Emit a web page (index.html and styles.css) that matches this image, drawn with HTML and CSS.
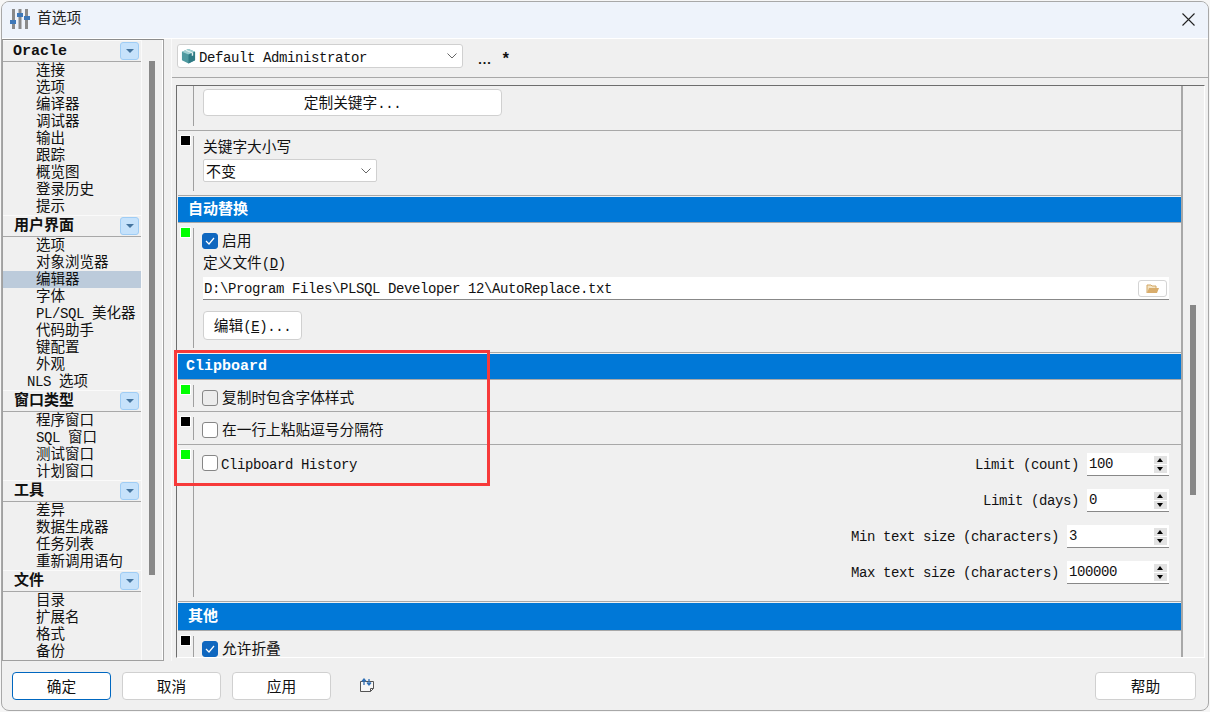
FILE: index.html
```html
<!DOCTYPE html>
<html lang="zh">
<head>
<meta charset="utf-8">
<title>首选项</title>
<link rel="stylesheet" href="styles.css">
</head>
<body>
<div class="window">
  <header class="titlebar">
    <svg class="app-icon" width="20" height="22" viewBox="0 0 20 22">
      <rect x="2" y="1" width="3" height="20" fill="#8a8a8a"/>
      <rect x="8.500" y="1" width="3" height="20" fill="#8a8a8a"/>
      <rect x="15" y="1" width="3" height="20" fill="#8a8a8a"/>
      <rect x="0" y="12" width="6" height="4" fill="#3f78b8"/>
      <rect x="7" y="5" width="6" height="4" fill="#3f78b8"/>
      <rect x="14" y="8" width="6" height="4" fill="#3f78b8"/>
    </svg>
    <span class="title">首选项</span>
    <svg class="close" width="13" height="13" viewBox="0 0 13 13"><path d="M.5.5l12 12M12.500.5l-12 12" stroke="#222" stroke-width="1.100" fill="none"/></svg>
  </header>

  <main class="main">
    <nav class="sidebar">
      <div class="tree">
        <div class="group group-latin"><span class="group-name">Oracle</span><span class="collapse"><i></i></span></div>
        <div class="item">连接</div><div class="item">选项</div><div class="item">编译器</div><div class="item">调试器</div><div class="item">输出</div><div class="item">跟踪</div><div class="item">概览图</div><div class="item">登录历史</div><div class="item">提示</div>
        <div class="group"><b>用户界面</b><span class="collapse"><i></i></span></div>
        <div class="item">选项</div><div class="item">对象浏览器</div><div class="item selected">编辑器</div><div class="item">字体</div><div class="item"><span class="mono">PL/SQL </span>美化器</div><div class="item">代码助手</div><div class="item">键配置</div><div class="item">外观</div><div class="item outdent"><span class="mono">NLS </span>选项</div>
        <div class="group"><b>窗口类型</b><span class="collapse"><i></i></span></div>
        <div class="item">程序窗口</div><div class="item"><span class="mono">SQL </span>窗口</div><div class="item">测试窗口</div><div class="item">计划窗口</div>
        <div class="group"><b>工具</b><span class="collapse"><i></i></span></div>
        <div class="item">差异</div><div class="item">数据生成器</div><div class="item">任务列表</div><div class="item">重新调用语句</div>
        <div class="group"><b>文件</b><span class="collapse"><i></i></span></div>
        <div class="item">目录</div><div class="item">扩展名</div><div class="item">格式</div><div class="item">备份</div>
      </div>
      <div class="side-scroll"><div class="side-thumb"></div></div>
    </nav>

    <section class="pane">
      <div class="toolbar">
        <div class="combo combo-wide">
          <svg class="cube" width="15" height="16" viewBox="0 0 16 17">
            <path d="M8 1l7 3v9l-7 3.500-7-3.500V4z" fill="#4f9aa0"/>
            <path d="M8 1l7 3-7 3-7-3z" fill="#9fd0d2"/>
            <path d="M8 7v9.500L15 13V4z" fill="#2f7a84"/>
            <path d="M4.500 2.600l7 3v3l1.500-.6v-3l-7-3z" fill="#e4f1f1"/>
          </svg>
          <span class="mono combo-text">Default Administrator</span>
          <svg class="chev" width="10" height="6" viewBox="0 0 10 6"><path d="M.5.5L5 5 9.500.5" fill="none" stroke="#666"/></svg>
        </div>
        <span class="tool-dots">...</span>
        <span class="tool-star">*</span>
      </div>

      <div class="panel-wrap">
        <div class="panel">
          <div class="content">
            <div class="row row-first">
              <div class="gutter"></div>
              <div class="body body-first"><button class="btn btn-custom">定制关键字<span class="mono">...</span></button></div>
            </div>
            <div class="row">
              <div class="gutter"><span class="mark"></span></div>
              <div class="body body-case">
                <div class="label">关键字大小写</div>
                <div class="combo combo-case"><span>不变</span><svg class="chev" width="10" height="6" viewBox="0 0 10 6"><path d="M.5.5L5 5 9.500.5" fill="none" stroke="#666"/></svg></div>
              </div>
            </div>

            <h2 class="band">自动替换</h2>
            <div class="row">
              <div class="gutter"><span class="mark green"></span></div>
              <div class="body body-auto">
                <label class="check"><span class="box on"><svg width="10" height="8" viewBox="0 0 10 8"><path d="M1 4l3 3 5-6" fill="none" stroke="#fff" stroke-width="1.200"/></svg></span><span class="check-text">启用</span></label>
                <div class="label label-def">定义文件<span class="mono">(<u>D</u>)</span></div>
                <div class="path"><span class="mono path-text">D:\Program Files\PLSQL Developer 12\AutoReplace.txt</span>
                  <span class="folder-btn"><svg width="13" height="11" viewBox="0 0 13 11"><path d="M1 10V2h4l1 1h4v2" fill="#f3e3c4" stroke="#d2a765"/><path d="M1 10l2-5h10l-2 5z" fill="#d9ad6c"/></svg></span>
                </div>
                <button class="btn btn-edit">编辑<span class="mono">(<u>E</u>)...</span></button>
              </div>
            </div>

            <h2 class="band band-latin">Clipboard</h2>
            <div class="row">
              <div class="gutter"><span class="mark green"></span></div>
              <div class="body body-check"><label class="check"><span class="box hover"></span><span class="check-text">复制时包含字体样式</span></label></div>
            </div>
            <div class="row">
              <div class="gutter"><span class="mark"></span></div>
              <div class="body body-check body-check-tall"><label class="check"><span class="box"></span><span class="check-text">在一行上粘贴逗号分隔符</span></label></div>
            </div>
            <div class="row">
              <div class="gutter"><span class="mark green"></span></div>
              <div class="body body-history">
                <label class="check"><span class="box"></span><span class="mono hist">Clipboard History</span></label>
                <div class="spins">
                  <div class="spin-row"><span class="mono">Limit (count)</span><div class="spin"><span class="mono">100</span><span class="arrows"><i class="up"></i><i class="down"></i></span></div></div>
                  <div class="spin-row"><span class="mono">Limit (days)</span><div class="spin"><span class="mono">0</span><span class="arrows"><i class="up"></i><i class="down"></i></span></div></div>
                  <div class="spin-row"><span class="mono">Min text size (characters)</span><div class="spin wide"><span class="mono">3</span><span class="arrows"><i class="up"></i><i class="down"></i></span></div></div>
                  <div class="spin-row"><span class="mono">Max text size (characters)</span><div class="spin wide"><span class="mono">100000</span><span class="arrows"><i class="up"></i><i class="down"></i></span></div></div>
                </div>
              </div>
            </div>

            <h2 class="band band-last">其他</h2>
            <div class="row row-last">
              <div class="gutter"><span class="mark"></span></div>
              <div class="body body-check"><label class="check"><span class="box on"><svg width="10" height="8" viewBox="0 0 10 8"><path d="M1 4l3 3 5-6" fill="none" stroke="#fff" stroke-width="1.200"/></svg></span><span class="check-text">允许折叠</span></label></div>
            </div>
          </div>
          <div class="pane-scroll"><div class="pane-thumb"></div></div>
        </div>
      </div>
    </section>
  </main>

  <footer class="footer">
    <button class="btn foot default">确定</button>
    <button class="btn foot">取消</button>
    <button class="btn foot">应用</button>
    <svg class="foot-icon" width="16" height="15" viewBox="0 0 16 15">
      <path d="M1.500 3.500h13v7l-3 3h-10z" fill="#f7f7f7" stroke="#555"/>
      <path d="M11.500 13.500v-3h3" fill="none" stroke="#555"/>
      <path d="M5 7V1.500M3 3.500l2-2.500 2 2.500M10 1v5.500M8 4.500l2 2.500 2-2.500" fill="none" stroke="#2f6fb5" stroke-width="1.300"/>
    </svg>
    <button class="btn foot help">帮助</button>
  </footer>

  <div class="annotation"></div>
</div>
</body>
</html>
```
FILE: styles.css
```css
* { box-sizing: border-box; }
html, body { margin: 0; padding: 0; background: #f6f6f6; }
body { width: 1210px; height: 712px; overflow: hidden; font-family: "Noto Sans CJK SC", "Liberation Sans", sans-serif; font-size: 15px; color: #111; }
button { font: inherit; color: inherit; padding: 0; }
.mono { font-family: "Liberation Mono", "Noto Sans CJK SC", monospace; font-size: 14px; letter-spacing: -0.4px; }

.window { position: relative; width: 1208px; height: 710px; margin: 1px 0 0 1px; background: #f0f0f0; border: 1px solid #a8a8a8; border-radius: 8px; display: flex; flex-direction: column; overflow: hidden; }

.titlebar { height: 37px; flex: none; display: flex; align-items: center; padding: 0 0 2px 8px; background: #eef3fb; border-bottom: 1px solid #fff; }
.app-icon { margin-right: 7px; }
.title { font-size: 14.700px; color: #222; margin-bottom: 5px; }
.close { margin-left: auto; margin-right: 13px; }

.main { flex: 1; min-height: 0; display: flex; }
.footer { height: 49px; flex: none; display: flex; align-items: flex-start; padding: 11px 12px 0 10px; gap: 11px; }

.sidebar { width: 162px; height: 622px; flex: none; display: flex; border-top: 1px solid #8c8c8c; border-left: 1px solid #a0a0a0; border-right: 1px solid #a0a0a0; border-bottom: 1px solid #a0a0a0; overflow: hidden; box-shadow: inset -1px 0 0 #fff; }
.tree { width: 139px; flex: none; border-right: 1px solid #fafafa; overflow: hidden; }
.group { height: 22px; display: flex; align-items: center; padding-left: 11px; font-size: 15px; line-height: 20px; border-bottom: 1px solid #a8a8a8; border-top: 1px solid #fafafa; }
.group b { margin-bottom: 4px; }
.group-latin { font-family: "Liberation Mono", monospace; font-weight: 700; padding-left: 10px; }
.group-name { margin-top: 1px; }
.collapse { margin-left: auto; margin-right: 2px; width: 19px; height: 18px; background: #c6e2fb; border: 1px solid #9fcdf5; border-radius: 3px; display: flex; align-items: center; justify-content: center; }
.collapse i { width: 0; height: 0; border-left: 4px solid transparent; border-right: 4px solid transparent; border-top: 4px solid #44749f; }
.item { height: 17px; line-height: 13px; padding-left: 33px; font-size: 14.500px; white-space: nowrap; color: #111; }
.item.selected { background: #bccbdb; }
.item.outdent { padding-left: 24px; }

.side-scroll { flex: 1; padding-left: 7px; padding-top: 21px; }
.side-thumb { width: 6px; height: 514px; background: #888; }

.pane { flex: 1; min-width: 0; margin-left: 7px; display: flex; flex-direction: column; border-left: 1px solid #fafafa; }
.toolbar { height: 39px; flex: none; display: flex; align-items: flex-start; padding: 5px 0 0 5px; border-bottom: 1px solid #a8a8a8; }
.combo { display: flex; align-items: center; height: 24px; background: #fff; border: 1px solid #d0d0d0; border-radius: 3px; }
.combo-wide { width: 286px; padding-left: 3px; }
.combo-text { margin-top: 3px; }
.cube { margin-right: 3px; }
.chev { margin-left: auto; margin-right: 5px; }
.tool-dots { margin-left: 13px; margin-top: 5px; font-family: "Liberation Mono", monospace; font-weight: 700; font-size: 13.33px; letter-spacing: -3.500px; width: 25px; line-height: 24px; }
.tool-star { font-family: "Liberation Mono", monospace; font-weight: 700; font-size: 16px; line-height: 24px; margin-top: 4px; }

.panel-wrap { flex: 1; min-height: 0; padding: 7px 3px 3px 4px; }
.panel { height: 100%; display: flex; border-top: 1px solid #6e6e6e; border-left: 1px solid #6e6e6e; border-right: 1px solid #fff; border-bottom: 1px solid #fff; overflow: hidden; }
.content { width: 1006px; flex: none; padding-left: 1px; border-right: 2px solid #a8a8a8; overflow: hidden; }
.pane-scroll { flex: 1; padding: 219px 0 0 7px; }
.pane-thumb { width: 6px; height: 190px; background: #888; }

.row { display: flex; padding: 5px 0 4px; border-bottom: 1px solid #a8a8a8; }
.row-first { padding-top: 0; }
.row-last { border-bottom: 0; }
.gutter { width: 16px; flex: none; border-right: 1px solid #a0a0a0; padding: 0 0 0 3px; }
.mark { display: block; width: 9px; height: 9px; background: #000; box-shadow: 0 0 0 1px #fff; }
.mark.green { background: #0f0; }
.body { flex: 1; min-width: 0; padding-left: 9px; padding-right: 12px; }
.body-first { height: 40px; padding-top: 3px; }
.body-case { height: 55px; }
.label { height: 20px; line-height: 20px; font-size: 14.700px; white-space: nowrap; }
.combo-case { width: 174px; height: 23px; margin-top: 3px; padding-left: 2px; border-radius: 2px; }
.body-auto { height: 120px; }
.label-def { margin-top: 3px; }
.body-check { height: 22px; }
.body-check-tall { height: 23px; }

.band { margin: 1px 0 0; height: 26px; background: #0078d7; background-clip: content-box; color: #fff; font-size: 15px; font-weight: 700; line-height: 22px; border-bottom: 1px solid #a8a8a8; text-indent: 10px; }
.band-latin { font-family: "Liberation Mono", monospace; text-indent: 8px; line-height: 26px; }
.band-last { height: 28px; line-height: 23px; }

.check { display: flex; align-items: center; height: 16px; margin: 5px 0 0 -1px; gap: 4px; font-size: 14.700px; white-space: nowrap; }
.check-text { margin-bottom: 4px; }
.box { width: 16px; height: 16px; flex: none; background: #fff; border: 1px solid #868686; border-radius: 3px; display: flex; align-items: center; justify-content: center; }
.box.hover { background: #ececec; }
.box.on { background: #0f67bf; border-color: #0f67bf; }
.hist { margin-left: -1px; margin-top: 3px; }

.btn { background: #fff; border: 1px solid #d0d0d0; border-radius: 4px; display: block; }
.btn-custom { width: 299px; height: 27px; font-size: 14.700px; line-height: 22px; }
.btn-edit { width: 99px; height: 29px; margin-top: 11px; font-size: 14.700px; line-height: 22px; }

.path { height: 23px; margin-top: 5px; background: #fff; border-bottom: 1px solid #888; display: flex; align-items: center; padding: 0 2px 0 1px; }
.path-text { margin-top: 2px; }
.folder-btn { margin-left: auto; width: 29px; height: 17px; border: 1px solid #d4d4d4; border-radius: 3px; display: flex; align-items: center; justify-content: center; }

.body-history { display: flex; justify-content: space-between; height: 147px; }
.spins { display: flex; flex-direction: column; align-items: flex-end; gap: 13px; padding-top: 3px; }
.spin-row { display: flex; align-items: center; gap: 8px; height: 23px; white-space: nowrap; }
.spin { width: 82px; height: 23px; background: #fff; border-bottom: 1px solid #888; display: flex; align-items: center; padding: 0 2px; }
.spin.wide { width: 102px; }
.arrows { margin-left: auto; width: 13px; display: flex; flex-direction: column; gap: 1px; }
.arrows i { display: block; width: 13px; height: 8px; background: #e2e2e2; position: relative; }
.arrows i::after { content: ""; position: absolute; left: 3px; width: 0; height: 0; border-left: 3.500px solid transparent; border-right: 3.500px solid transparent; }
.arrows .up::after { top: 2px; border-bottom: 4px solid #000; }
.arrows .down::after { top: 2px; border-top: 4px solid #000; }

.foot { width: 99px; height: 28px; font-size: 14.700px; line-height: 20px; }
.foot.default { border: 1px solid #0067c0; }
.foot-icon { margin: 6px 0 0 17px; }
.foot.help { margin-left: auto; width: 101px; }

.annotation { position: absolute; left: 172px; top: 348px; width: 316px; height: 136px; border: 3px solid #f73a3a; }
```
